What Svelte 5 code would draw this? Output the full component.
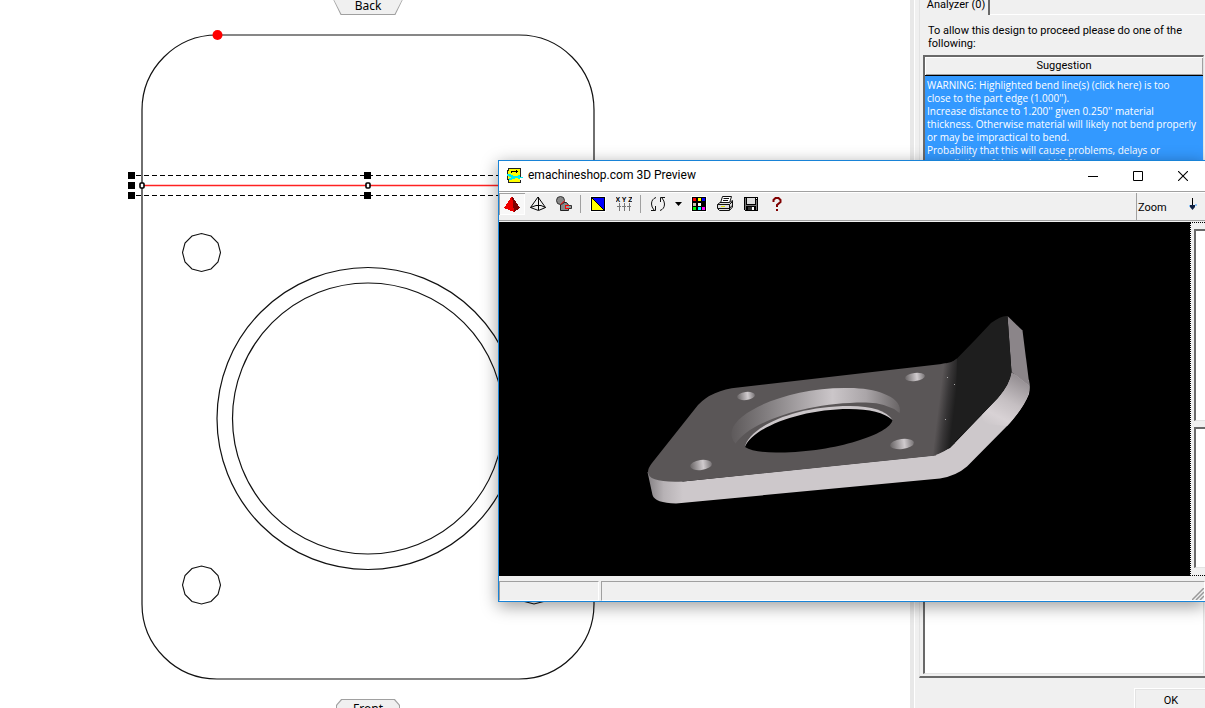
<script lang="ts">
	const holeRadius = 19;
	const holes = [
		{ x: 201.5, y: 252.5 },
		{ x: 534, y: 252.5 },
		{ x: 201.5, y: 585 },
		{ x: 534, y: 585 }
	];
	const handles = [
		{ x: 131, y: 175 },
		{ x: 131, y: 185 },
		{ x: 131, y: 195 },
		{ x: 367, y: 175 },
		{ x: 367, y: 195 }
	];
	const boreHoles = [
		{ x: 746, y: 396, rx: 9, ry: 4 },
		{ x: 915, y: 377, rx: 10, ry: 4 },
		{ x: 701, y: 465, rx: 11, ry: 5 },
		{ x: 902, y: 444, rx: 12, ry: 5 }
	];
	const swatches = ['#f00', '#ff0', '#00f', '#c8c0b0', '#fff', '#000', '#0f0', '#0ff', '#f0f'];

	// small holes are drawn as twelve sided polygons
	function polygon(cx: number, cy: number, r: number) {
		let points = [];
		for (let i = 0; i < 12; i++) {
			const a = (i * Math.PI) / 6;
			points.push(`${(cx + r * Math.cos(a)).toFixed(1)},${(cy + r * Math.sin(a)).toFixed(1)}`);
		}
		return points.join(' ');
	}
</script>

<main>
	<section class="drawing">
		<button type="button" class="view-tab back">Back</button>
		<svg class="plan" width="910" height="708" viewBox="0 0 910 708" fill="none" stroke="#111">
			<rect x="142" y="35" width="452" height="644" rx="75" stroke-width="1.2" />
			{#each holes as hole}
				<polygon points={polygon(hole.x, hole.y, holeRadius)} stroke-width="1.1" />
			{/each}
			<circle cx="368" cy="418.5" r="151" stroke-width="1.2" />
			<circle cx="368" cy="418.5" r="135.5" stroke-width="1.2" />
			<path d="M142 185.5H604" stroke="#f22" stroke-width="1.4" />
			<path d="M136 175.5H604M136 195.5H604" stroke="#000" stroke-dasharray="5 3" />
			{#each handles as h}
				<rect x={h.x - 3} y={h.y - 3} width="7" height="7" fill="#000" stroke="none" />
			{/each}
			<rect x="140" y="183" width="4" height="5" rx="1" fill="#fff" stroke="#000" stroke-width="1.6" />
			<rect x="366" y="183" width="4" height="5" rx="1" fill="#fff" stroke="#000" stroke-width="1.6" />
			<circle cx="217.5" cy="35" r="5" fill="#f00" stroke="none" />
		</svg>
		<button type="button" class="view-tab front">Front</button>
	</section>

	<aside>
		<div class="tab-page">
			<div class="tabs">
				<button type="button" class="tab">Analyzer (0)</button>
				<span class="tab-rest"></span>
			</div>
			<p class="intro">To allow this design to proceed please do one of the following:</p>
			<div class="list">
				<table>
					<thead>
						<tr><th>Suggestion</th></tr>
					</thead>
					<tbody>
						<tr>
							<td>
								WARNING: Highlighted bend line(s) (click here) is too<br />
								close to the part edge (1.000'').<br />
								Increase distance to 1.200'' given 0.250'' material<br />
								thickness. Otherwise material will likely not bend properly<br />
								or may be impractical to bend.<br />
								Probability that this will cause problems, delays or<br />
								cancellation of the order: **10%
							</td>
						</tr>
					</tbody>
				</table>
			</div>
		</div>
		<div class="dialog-buttons">
			<button type="button" class="ok">OK</button>
		</div>
	</aside>

	<div class="window">
		<header>
			<svg width="16" height="16" viewBox="0 0 16 16" shape-rendering="crispEdges">
				<path d="M1 0H14V10H13V12H14V15H1V12H0V2H1Z" fill="#222" />
				<path d="M2 1H13V14H2V11H1V3H2Z" fill="#ff0" />
				<path d="M4 3.500H11M9.500 2V5M4.500 3V5" stroke="#000" />
				<path d="M0 6H4V7H6V8H11V7H13V9H16V10H13V11H11V10H8V11H5V12H2V10H4V9H2V8H0Z" fill="#0ee" />
			</svg>
			<h1>emachineshop.com 3D Preview</h1>
			<div class="window-buttons">
				<button type="button" aria-label="Minimize">
					<svg width="10" height="10" viewBox="0 0 10 10"><path d="M0 5.5H10" stroke="#000" /></svg>
				</button>
				<button type="button" aria-label="Maximize">
					<svg width="10" height="10" viewBox="0 0 10 10"><path d="M.5 .5H9.5V9.5H.5Z" fill="none" stroke="#000" /></svg>
				</button>
				<button type="button" aria-label="Close">
					<svg width="10" height="10" viewBox="0 0 10 10"><path d="M0 0L10 10M10 0L0 10" stroke="#000" stroke-width="1.1" /></svg>
				</button>
			</div>
		</header>

		<div class="toolbar">
			<button type="button" class="pressed" aria-label="Solid view">
				<svg width="16" height="16" viewBox="0 0 16 16" shape-rendering="crispEdges">
					<path d="M8 0L0 12L10 16Z" fill="#e00" />
					<path d="M8 0L16 12L10 16Z" fill="#800000" />
				</svg>
			</button>
			<button type="button" aria-label="Wireframe view">
				<svg width="16" height="16" viewBox="0 0 16 16" fill="none" stroke="#000">
					<path d="M8 1L.5 11.5L8.5 14.5L15.5 11.5ZM8.5 1V14M.5 11.5L6 9.5H11L15.5 11.5" />
				</svg>
			</button>
			<button type="button" aria-label="Parts">
				<svg width="16" height="16" viewBox="0 0 16 16">
					<path d="M4.500 6.500H10.500L12.500 9V14.500H4.500Z" fill="#888" stroke="#222" />
					<circle cx="4.500" cy="4.500" r="4" fill="#888" stroke="#333" />
					<path d="M9.500 9.500H15.500V12.500H9.500Z" fill="#999" stroke="#333" />
					<path d="M4.500 8.500L8.500 5M13 9.500H9.500V12.500H13" fill="none" stroke="#f00" />
				</svg>
			</button>
			<span class="separator"></span>
			<button type="button" aria-label="Colors">
				<svg class="halo" width="14" height="14" viewBox="0 0 14 14" shape-rendering="crispEdges">
					<path d="M0 0H14V14H0Z" fill="#000" />
					<path d="M1 1H13V13Z" fill="#00f" />
					<path d="M1 1V13H13Z" fill="#ff0" />
					<path d="M1 1L13 13" stroke="#000" />
				</svg>
			</button>
			<button type="button" aria-label="XYZ axes">
				<svg width="16" height="16" viewBox="0 0 16 16" fill="none">
					<text class="axes" x="8" y="6" text-anchor="middle">X Y Z</text>
					<path d="M1 10.500h4M6 10.500h4M11 10.500h4M3.500 7v8M8.500 7v8M13.500 7v8" stroke="#777" shape-rendering="crispEdges" />
				</svg>
			</button>
			<span class="separator"></span>
			<button type="button" aria-label="Rotate">
				<svg width="16" height="16" viewBox="0 0 16 16" fill="none" stroke="#111">
					<path d="M6 1.500Q1.500 3 1.500 8Q1.500 11 4 14M1 14.500H5.500V10M10 14.500Q14.500 13 14.500 8Q14.500 5 12 2M15 1.500H10.500V6" />
				</svg>
			</button>
			<button type="button" class="drop" aria-label="Rotate options">
				<svg width="7" height="4" viewBox="0 0 7 4"><path d="M0 0H7L3.500 4Z" /></svg>
			</button>
			<button type="button" aria-label="Palette">
				<svg class="halo" width="14" height="14" viewBox="0 0 14 14" shape-rendering="crispEdges">
					<path d="M0 0H14V14H0Z" />
					{#each swatches as color, i}
						<rect x={1 + (i % 3) * 4 + (i % 3 ? 1 : 0)} y={1 + Math.floor(i / 3) * 4 + (i > 2 ? 1 : 0)} width="3" height="3" fill={color} />
					{/each}
				</svg>
			</button>
			<button type="button" aria-label="Print">
				<svg width="16" height="16" viewBox="0 0 16 16" stroke="#111">
					<path d="M5.500 .5H14.500L12.500 7H3.500Z" fill="#fff" />
					<path d="M6.500 2.500H12M6 4.500H11" />
					<path d="M3 6.500H12.500L15.500 4.500V11L12.500 14.500H2.500L.5 12.500V8.500Z" fill="#ddd" />
					<path d="M.5 8.500H12.500V14M12.500 8.500L15.500 5.500M1 12.500H12.500L15 9.500" fill="none" />
					<path d="M4 10.500H8" stroke="#dd0" />
				</svg>
			</button>
			<button type="button" aria-label="Save">
				<svg width="14" height="14" viewBox="0 0 14 14" shape-rendering="crispEdges">
					<path d="M0 0H14V14H1L0 13Z" />
					<path d="M3 1H11V7H3Z" fill="#ddd" />
					<path d="M1 1H2V13H1ZM12 3H13V13H12ZM2 8H12V9H2Z" fill="#777" />
					<path d="M4 10H10V13H4Z" fill="#333" />
					<path d="M8 10H10V13H8Z" fill="#fff" />
					<path d="M12 1H13V2H12Z" fill="#fff" />
				</svg>
			</button>
			<button type="button" aria-label="Help">
				<svg width="10" height="14" viewBox="0 0 10 14" fill="none" stroke="#800000" stroke-width="2">
					<path d="M1.500 5V3L3.500 1H6.500L8.500 3V5L5 8V10M5 12V14" />
				</svg>
			</button>
			<div class="zoom">
				<span>Zoom</span>
				<button type="button" aria-label="Zoom level">
					<svg width="9" height="12" viewBox="0 0 9 12">
						<path d="M4.500 0V11" stroke="#000" />
						<path d="M2 7H7V9L4.500 12L2 9Z" fill="#124" />
						<path d="M1 8H2M7 7H9" stroke="#39f" />
					</svg>
				</button>
			</div>
		</div>

		<div class="body">
			<svg class="scene" height="354" viewBox="499 222 691 354" preserveAspectRatio="xMidYMid slice">
				<defs>
					<linearGradient id="side" gradientUnits="userSpaceOnUse" x1="648" y1="0" x2="683" y2="0">
						<stop offset="0" stop-color="#858184" />
						<stop offset=".45" stop-color="#b7b2b5" />
						<stop offset="1" stop-color="#cdc8cb" />
					</linearGradient>
					<linearGradient id="bend" gradientUnits="userSpaceOnUse" x1="938" y1="410" x2="954" y2="412">
						<stop offset="0" stop-color="#5a5657" />
						<stop offset=".5" stop-color="#383637" />
						<stop offset="1" stop-color="#1e1e1e" />
					</linearGradient>
					<linearGradient id="corner" gradientUnits="userSpaceOnUse" x1="1022" y1="374" x2="994" y2="428">
						<stop offset="0" stop-color="#8d878b" />
						<stop offset=".5" stop-color="#c5bfc2" />
						<stop offset=".8" stop-color="#d8d2d5" />
						<stop offset="1" stop-color="#cdc8cb" />
					</linearGradient>
					<linearGradient id="wall">
						<stop offset="0" stop-color="#5e5a5b" />
						<stop offset=".25" stop-color="#898587" />
						<stop offset=".6" stop-color="#cbc6c9" />
						<stop offset=".8" stop-color="#aaa5a8" />
						<stop offset="1" stop-color="#686465" />
					</linearGradient>
					<linearGradient id="bore">
						<stop offset="0" stop-color="#696566" />
						<stop offset=".6" stop-color="#d0cbce" />
						<stop offset="1" stop-color="#777375" />
					</linearGradient>
				</defs>
				<path fill="url(#side)" d="M647.500 472L652.500 495Q655 503 676 503.500L940 478.500Q956 476 967 466.500L1010 423Q1023 408 1029 394Q1030 388 1029 380L1011.500 373Q1010 384 998 398L950 448L933 455.500L683 481.500Z" />
				<path fill="url(#corner)" d="M1011.500 372L1029.500 386Q1030 394 1024 404Q1018 414 1007 426L984 424L982 415L998 398Q1010 384 1011.500 372Z" />
				<path fill="#8b8589" d="M1007.500 316L1022.500 330.500L1029.500 386L1011.500 372Z" />
				<path fill="#5a5657" d="M648 472Q648 468 652 463L698 405Q712 390 738 387.500L946 363.500L949 410L936 455.500L683 481.500Q648 483 648 472Z" />
				<path fill="#1e1e1e" d="M950 363Q954 361 957 358.500L975 340L991 323Q1002 315 1007.500 316L1011.500 372Q1010 384 998 398L950 447L945 448Z" />
				<path fill="url(#bend)" d="M941 364Q952 363 957 358.500L955 443Q946 452 933 455.800Z" />
				<path fill="url(#wall)" d="M735.500 443.500Q730 438 732 430C737 411 788 388 845 388C875 387 904 397 899.500 413Q888 403 866 402.500C810 402 750 421 735.500 443.500Z" />
				<path fill="#cbc6c9" d="M745 447C748 429 790 406 850 406Q883 406 892.500 420L880 428L770 445Z" />
				<path fill="#000" d="M745 447C753 427 802 409 849 409Q880 409 892.500 420C890 434 836 452 780 452.500Q754 453 745 447Z" />
				{#each boreHoles as b}
					<ellipse cx={b.x} cy={b.y} rx={b.rx} ry={b.ry} fill="url(#bore)" transform="rotate(-7 {b.x} {b.y})" />
				{/each}
				<path fill="#aaa" d="M947 377h1v1h-1zM954 384h1v1h-1zM945 419h1v1h-1z" />
			</svg>
			<div class="side">
				<div class="side-box"></div>
				<div class="side-box lower"></div>
			</div>
		</div>

		<footer>
			<div class="status short"></div>
			<div class="status">
				<svg width="12" height="12" viewBox="0 0 12 12"><path d="M0 12L12 0M4 12L12 4M8 12L12 8" stroke="#999" stroke-width="1.500" /></svg>
			</div>
		</footer>
	</div>
</main>

<style>
	:global(body) {
		margin: 0;
		overflow: hidden;
	}

	main {
		position: relative;
		display: grid;
		grid-template-columns: minmax(0, 1fr) 295px;
		height: 100vh;
		min-height: 700px;
		overflow: hidden;
		background: #fff;
		color: #000;
		font-family: Roboto, 'Liberation Sans', sans-serif;
		font-size: 11px;
		line-height: 13px;
	}

	button {
		margin: 0;
		padding: 0;
		border: 0;
		background: none;
		color: inherit;
		font: inherit;
	}

	svg {
		display: block;
		flex-shrink: 0;
	}

	.drawing {
		position: relative;
		overflow: hidden;
	}

	/* view tabs lie over the drawing, half out of its edges */
	.view-tab {
		position: absolute;
		z-index: 1;
		left: 331px;
		width: 74px;
		height: 20px;
		background: #a0a0a0;
		font-family: 'Noto Sans', sans-serif;
		font-size: 12px;
		line-height: 20px;
		isolation: isolate;
	}

	.view-tab::before {
		content: '';
		position: absolute;
		z-index: -1;
		inset: 1px;
		background: #f0f0f0;
	}

	.back {
		top: -5px;
		padding-top: 1px;
	}

	.back,
	.back::before {
		clip-path: polygon(0 0, 100% 0, 87% 100%, 13% 100%);
	}

	.front {
		top: 699px;
		left: 336px;
		width: 64px;
	}

	.front,
	.front::before {
		clip-path: polygon(8% 0, 92% 0, 100% 30%, 100% 100%, 0 100%, 0 30%);
	}

	aside {
		display: flex;
		flex-direction: column;
		padding-left: 5px;
		background: linear-gradient(90deg, #e8e8e8 4px, #fff 4px, #fff 5px, #f0f0f0 5px);
	}

	.tab-page {
		margin-left: 4px;
		height: 678px;
		box-sizing: border-box;
		border-left: 1px solid #e3e3e3;
		border-bottom: 2px solid #696969;
		overflow: hidden;
	}

	.tabs {
		display: flex;
		height: 15px;
	}

	.tab {
		width: 70px;
		padding: 0 0 6px 4px;
		border-right: 2px solid #696969;
		line-height: 9px;
		white-space: nowrap;
	}

	.tab-rest {
		flex: 1;
		border-bottom: 1px solid #fff;
	}

	.intro {
		margin: 9px 16px 5px 8px;
	}

	.list {
		height: 616px;
		margin: 0 1px 0 3px;
		border: 2px solid #696969;
		border-right-color: #e3e3e3;
		border-bottom-color: #e3e3e3;
		border-right-width: 1px;
		border-bottom-width: 1px;
		background: #fff;
	}

	table {
		width: 100%;
		table-layout: fixed;
		border-collapse: collapse;
	}

	th {
		height: 16px;
		padding: 0 0 2px;
		border-bottom: 1px solid #000;
		background: #f0f0f0;
		box-shadow: inset 1px 1px #fff, inset -1px -1px #a0a0a0;
		font-weight: normal;
	}

	td {
		padding: 3px 2px;
		background: #39f;
		color: #fff;
		font-family: 'Open Sans', 'Noto Sans', sans-serif;
		font-size: 10px;
		white-space: nowrap;
	}

	.dialog-buttons {
		display: flex;
		justify-content: flex-end;
		padding-top: 10px;
	}

	.ok {
		width: 71px;
		height: 23px;
		padding-left: 2px;
		border-top: 1px solid #fff;
		border-left: 1px solid #fff;
		box-shadow: inset 1px 1px #e3e3e3;
	}

	.window {
		position: absolute;
		top: 160px;
		left: 498px;
		right: 0;
		border: 1px solid #1883d7;
		border-right: 0;
		background: #f0f0f0;
		box-shadow: 0 4px 16px rgba(0, 0, 0, 0.4);
	}

	header {
		display: flex;
		align-items: center;
		box-sizing: border-box;
		height: 30px;
		padding: 0 0 1px 8px;
		background: #fff;
	}

	h1 {
		flex: 1;
		margin: 0 0 0 5px;
		font-size: 12px;
		font-weight: normal;
	}

	.window-buttons {
		display: flex;
	}

	.window-buttons button {
		display: flex;
		align-items: center;
		justify-content: center;
		width: 45px;
		height: 28px;
	}

	.toolbar {
		display: flex;
		height: 27px;
		padding-top: 1px;
		border-top: 1px solid #a0a0a0;
		border-bottom: 1px solid #a0a0a0;
		box-shadow: inset 0 1px #fff;
	}

	.toolbar button {
		display: flex;
		align-items: center;
		justify-content: center;
		width: 26px;
		height: 22px;
	}

	.toolbar .pressed {
		background: #f8f8f8;
		box-shadow: inset 1px 1px #a0a0a0, inset -1px -1px #fff;
	}

	.toolbar .drop {
		width: 15px;
	}

	.halo {
		outline: 1px solid #fff;
	}

	.axes {
		fill: #000;
		font-family: 'Liberation Sans', sans-serif;
		font-size: 7px;
		font-weight: bold;
	}

	.separator {
		width: 1px;
		height: 18px;
		margin: 2px 4px 0 3px;
		background: #a0a0a0;
	}

	.zoom {
		display: flex;
		align-items: flex-start;
		width: 68px;
		margin-left: auto;
		border-left: 1px solid #a0a0a0;
	}

	.zoom span {
		flex: 1;
		padding: 8px 0 0 1px;
	}

	.body {
		display: flex;
		height: 354px;
		margin-top: 1px;
		background: #000;
	}

	.scene {
		flex: 1;
		min-width: 0;
	}

	.side {
		width: 15px;
		box-sizing: border-box;
		padding: 6px 0 6px 3px;
		border: 1px dotted #000;
		border-right: 0;
		background: #f0f0f0;
	}

	.side-box {
		box-sizing: border-box;
		height: 192px;
		border: 2px solid #696969;
		border-right: 0;
		border-bottom: 1px solid #e3e3e3;
		background: #fff;
	}

	.lower {
		height: 141px;
		margin-top: 6px;
	}

	footer {
		display: flex;
		gap: 2px;
		padding-top: 5px;
		height: 20px;
	}

	.status {
		display: flex;
		flex: 1;
		align-items: flex-end;
		justify-content: flex-end;
		border: 1px solid #a0a0a0;
		border-right-color: #fff;
		border-bottom-color: #fff;
		border-right-width: 1px;
	}

	.short {
		flex: 0 0 98px;
	}
</style>
